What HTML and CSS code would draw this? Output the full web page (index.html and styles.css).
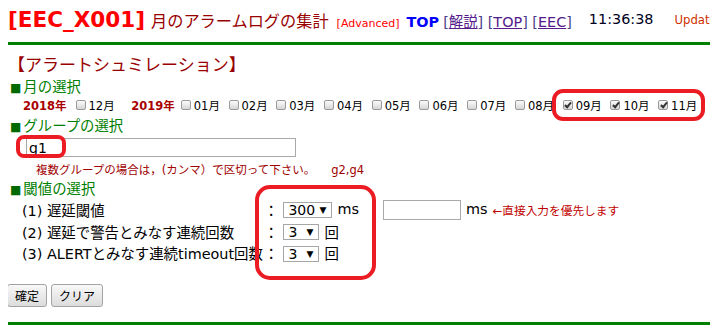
FILE: index.html
```
<!DOCTYPE html>
<html lang="ja">
<head>
<meta charset="utf-8">
<title>EEC_X001 月のアラームログの集計</title>
<link rel="stylesheet" href="styles.css">
</head>
<body>
<div class="header"><span class="code">[EEC_X001]</span><span class="subtitle">月のアラームログの集計</span><span class="adv">[Advanced]</span><span class="top">TOP</span><span class="nav">[<a href="#">解説</a>] [<a href="#">TOP</a>] [<a href="#">EEC</a>]</span><span class="clock">11:36:38</span><span class="update">Update</span></div>

<h2 class="sim">【アラートシュミレーション】</h2>

<div class="sec"><span class="mark">■</span>月の選択</div>
<div class="months">
  <span class="yr">2018年</span>
  <label class="m"><input type="checkbox">12月</label>
  <span class="yr yr2">2019年</span>
  <label class="m"><input type="checkbox">01月</label>
  <label class="m"><input type="checkbox">02月</label>
  <label class="m"><input type="checkbox">03月</label>
  <label class="m"><input type="checkbox">04月</label>
  <label class="m"><input type="checkbox">05月</label>
  <label class="m"><input type="checkbox">06月</label>
  <label class="m"><input type="checkbox">07月</label>
  <label class="m"><input type="checkbox">08月</label>
  <label class="m"><input type="checkbox" checked>09月</label>
  <label class="m"><input type="checkbox" checked>10月</label>
  <label class="m"><input type="checkbox" checked>11月</label>
</div>

<div class="sec sec-gap"><span class="mark">■</span>グループの選択</div>
<div class="group"><input class="group-input" type="text" value="g1"></div>
<div class="note">複数グループの場合は，(カンマ）で区切って下さい。<span class="eg">g2,g4</span></div>

<div class="sec sec-tight"><span class="mark">■</span>閾値の選択</div>
<div class="rows">
  <div class="row r1">
    <span class="label">(1) 遅延閾値</span><span class="colon">：</span>
    <span class="sel w49"><select><option>300</option></select></span>
    <span class="unit">ms</span>
    <input class="direct" type="text">
    <span class="unit">ms</span>
    <span class="hint">←直接入力を優先します</span>
  </div>
  <div class="row r2">
    <span class="label">(2) 遅延で警告とみなす連続回数</span><span class="colon">：</span>
    <span class="sel w36"><select><option>3</option></select></span>
    <span class="unit">回</span>
  </div>
  <div class="row r3">
    <span class="label">(3) ALERTとみなす連続timeout回数</span><span class="colon">：</span>
    <span class="sel w36"><select><option>3</option></select></span>
    <span class="unit">回</span>
  </div>
</div>

<div class="buttons">
  <button class="btn" type="button">確定</button>
  <button class="btn" type="button">クリア</button>
</div>

<div class="rule"></div>

<div class="mark-box box-group"></div>
<div class="mark-box box-months"></div>
<div class="mark-box box-thresh"></div>
</body>
</html>
```

FILE: styles.css
```
html, body {
  overflow: hidden;
}
body {
  margin: 8px 0 0 8px;
  font-family: "DejaVu Sans", "Noto Sans CJK JP", sans-serif;
  font-size: 14.4px;
  color: #000;
  background: #fff;
}

/* header */
.header {
  height: 34px;
  line-height: 22px;
  white-space: nowrap;
  overflow: hidden;
  border-bottom: 3px solid #008000;
}
.code {
  font-size: 21.5px;
  font-weight: bold;
  color: #ff0000;
}
.subtitle {
  margin-left: 6px;
  font-family: "Noto Sans CJK JP", sans-serif;
  font-size: 16.2px;
  color: #990000;
}
.adv {
  margin-left: 8px;
  font-size: 11px;
  color: #ff0000;
}
.top {
  margin-left: 7px;
  font-weight: bold;
  font-size: 14.4px;
  color: #0000ff;
}
.nav {
  margin-left: 4px;
  color: #4b3c8c;
}
.nav a {
  color: #551a8b;
  text-decoration: underline;
}
.clock {
  margin-left: 17px;
  color: #000022;
  vertical-align: 3px;
}
.update {
  margin-left: 21px;
  font-size: 11.7px;
  color: #d03000;
  vertical-align: 3px;
}

/* title */
.sim {
  margin: 9px 0 0;
  font-family: "Noto Sans CJK JP", sans-serif;
  font-size: 17px;
  font-weight: normal;
  line-height: 20px;
  height: 20px;
  color: #990000;
}

/* section heads */
.sec {
  margin-top: 4px;
  padding-left: 2px;
  height: 18px;
  line-height: 18px;
  color: #008000;
  white-space: nowrap;
}
.sec-gap {
  margin-top: 4px;
}
.sec-tight {
  margin-top: 1px;
}
.mark {
  display: inline-block;
  margin-right: 2px;
  font-size: 12px;
  color: #006a00;
}

/* months */
.months {
  display: flex;
  align-items: center;
  height: 17px;
  margin-left: 15px;
  font-size: 11.5px;
  white-space: nowrap;
}
.yr {
  font-weight: bold;
  color: #aa0000;
  margin-right: 9px;
}
.yr2 {
  margin-left: 8px;
  margin-right: 6px;
}
.m {
  display: inline-flex;
  align-items: center;
  margin-right: 8.6px;
  color: #000;
}
.m input {
  appearance: none;
  -webkit-appearance: none;
  position: relative;
  width: 10px;
  height: 10px;
  margin: 0 3px 0 0;
  border: 1px solid #9a9a9a;
  border-radius: 2px;
  background: linear-gradient(#fbfbfb, #d6d6d6);
  box-sizing: border-box;
}
.m input:checked::after {
  content: "";
  position: absolute;
  left: 2.5px;
  top: 0px;
  width: 2px;
  height: 5px;
  border: solid #333;
  border-width: 0 2px 2px 0;
  transform: rotate(40deg);
}

/* group */
.group {
  margin-top: 3px;
  height: 19px;
}
.group-input {
  margin: 0 0 0 18px;
  width: 270px;
  height: 19px;
  box-sizing: border-box;
  border: 1px solid #a9a9a9;
  padding: 0 2px;
  font-family: "DejaVu Sans", sans-serif;
  font-size: 14px;
  color: #000;
  outline: none;
}
.note {
  margin: 4px 0 0 28px;
  height: 18px;
  line-height: 18px;
  font-size: 11.5px;
  color: #a00000;
  white-space: nowrap;
}
.eg {
  margin-left: 16px;
}

/* threshold rows */
.rows {
  padding-left: 14px;
}
.row {
  display: flex;
  align-items: center;
  height: 22px;
  white-space: nowrap;
}
.row.r3 {
  height: 21px;
}
.label {
  flex: 0 0 242px;
  width: 242px;
}
.colon {
  font-family: "Noto Sans CJK JP", sans-serif;
}
.sel {
  position: relative;
  display: inline-block;
  margin: 2px 0 0 5px;
  line-height: 0;
}
.sel select {
  appearance: none;
  -webkit-appearance: none;
  height: 16px;
  box-sizing: border-box;
  border: 1px solid #a6a6a6;
  border-radius: 0;
  padding: 0 0 0 4px;
  background: #fff;
  color: #000;
  font-family: "DejaVu Sans", sans-serif;
  font-size: 14px;
  line-height: 14px;
}
.sel::after {
  content: "▼";
  position: absolute;
  right: 6px;
  top: 3px;
  font-family: "DejaVu Sans", sans-serif;
  font-size: 9px;
  line-height: 10px;
  color: #000;
  pointer-events: none;
}
.w49 select {
  width: 49px;
}
.w36 select {
  width: 36px;
}
.unit {
  margin-left: 5px;
}
.direct {
  margin: 2px 0 0 24px;
  width: 78px;
  height: 20px;
  box-sizing: border-box;
  border: 1px solid #a9a9a9;
  padding: 0 2px;
}
.hint {
  margin-left: 5px;
  font-size: 11.7px;
  color: #c00000;
}

/* buttons */
.buttons {
  display: flex;
  gap: 4px;
  margin: 21px 0 0 -1px;
}
.btn {
  height: 23px;
  padding: 0 7px;
  border: 1px solid #a3a3a3;
  border-radius: 3px;
  background: linear-gradient(#f8f8f8, #dcdcdc);
  font-family: "Noto Sans CJK JP", sans-serif;
  font-size: 12px;
  color: #000;
}

.rule {
  margin-top: 15px;
  border-top: 3px solid #008000;
}

/* red annotation marks drawn over the screenshot */
.mark-box {
  position: absolute;
  box-sizing: border-box;
  border: 4px solid #ec1c24;
  pointer-events: none;
}
.box-group {
  left: 16px;
  top: 135px;
  width: 50px;
  height: 23px;
  border-radius: 8px;
}
.box-months {
  left: 552px;
  top: 89px;
  width: 153px;
  height: 32px;
  border-radius: 11px;
}
.box-thresh {
  left: 255px;
  top: 185px;
  width: 121px;
  height: 95px;
  border-radius: 15px;
}
```
